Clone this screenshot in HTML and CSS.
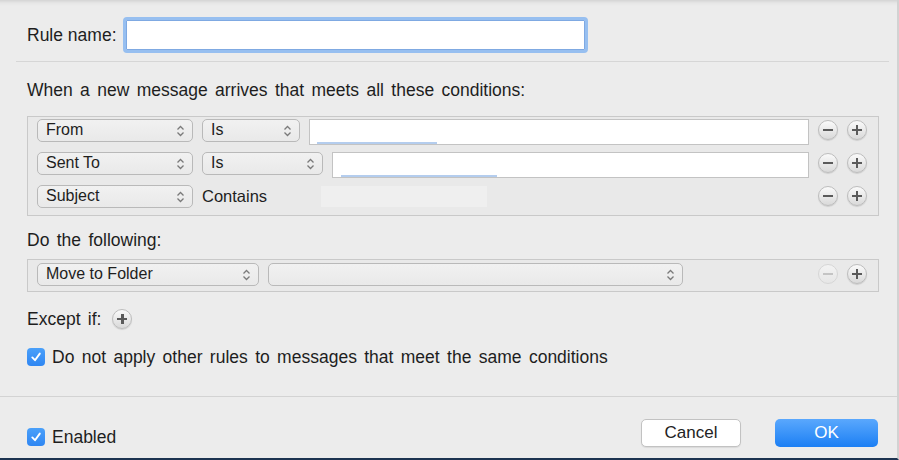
FILE: index.html
```html
<!DOCTYPE html>
<html>
<head>
<meta charset="utf-8">
<link rel="stylesheet" href="styles.css">
</head>
<body>
<div class="window">
  <div class="content">
    <div class="name-row">
      <label class="label tight">Rule name:</label>
      <div class="name-input"></div>
    </div>
    <div class="sep"></div>
    <div class="label heading">When a new message arrives that meets all these conditions:</div>
    <div class="box conditions">
      <div class="row">
        <div class="popup w156"><span>From</span><svg class="chev" width="9" height="12" viewBox="0 0 9 12"><path d="M1.5 4.5L4.5 1.5L7.5 4.5M1.5 7.5L4.5 10.5L7.5 7.5" fill="none" stroke="#7a7a7a" stroke-width="1.3"/></svg></div>
        <div class="popup w98"><span>Is</span><svg class="chev" width="9" height="12" viewBox="0 0 9 12"><path d="M1.5 4.5L4.5 1.5L7.5 4.5M1.5 7.5L4.5 10.5L7.5 7.5" fill="none" stroke="#7a7a7a" stroke-width="1.3"/></svg></div>
        <div class="field"><span class="mark m1"></span></div>
        <div class="circ"><span class="minus"></span></div>
        <div class="circ"><span class="plus"></span></div>
      </div>
      <div class="row">
        <div class="popup w156"><span>Sent To</span><svg class="chev" width="9" height="12" viewBox="0 0 9 12"><path d="M1.5 4.5L4.5 1.5L7.5 4.5M1.5 7.5L4.5 10.5L7.5 7.5" fill="none" stroke="#7a7a7a" stroke-width="1.3"/></svg></div>
        <div class="popup w121"><span>Is</span><svg class="chev" width="9" height="12" viewBox="0 0 9 12"><path d="M1.5 4.5L4.5 1.5L7.5 4.5M1.5 7.5L4.5 10.5L7.5 7.5" fill="none" stroke="#7a7a7a" stroke-width="1.3"/></svg></div>
        <div class="field"><span class="mark m2"></span></div>
        <div class="circ"><span class="minus"></span></div>
        <div class="circ"><span class="plus"></span></div>
      </div>
      <div class="row">
        <div class="popup w156"><span>Subject</span><svg class="chev" width="9" height="12" viewBox="0 0 9 12"><path d="M1.5 4.5L4.5 1.5L7.5 4.5M1.5 7.5L4.5 10.5L7.5 7.5" fill="none" stroke="#7a7a7a" stroke-width="1.3"/></svg></div>
        <div class="static">Contains</div>
        <div class="redact"></div>
        <div class="spacer"></div>
        <div class="circ"><span class="minus"></span></div>
        <div class="circ"><span class="plus"></span></div>
      </div>
    </div>
    <div class="label heading2">Do the following:</div>
    <div class="box actions">
      <div class="row">
        <div class="popup w222"><span>Move to Folder</span><svg class="chev" width="9" height="12" viewBox="0 0 9 12"><path d="M1.5 4.5L4.5 1.5L7.5 4.5M1.5 7.5L4.5 10.5L7.5 7.5" fill="none" stroke="#7a7a7a" stroke-width="1.3"/></svg></div>
        <div class="popup w415"><span></span><svg class="chev" width="9" height="12" viewBox="0 0 9 12"><path d="M1.5 4.5L4.5 1.5L7.5 4.5M1.5 7.5L4.5 10.5L7.5 7.5" fill="none" stroke="#7a7a7a" stroke-width="1.3"/></svg></div>
        <div class="spacer"></div>
        <div class="circ disabled"><span class="minus"></span></div>
        <div class="circ"><span class="plus"></span></div>
      </div>
    </div>
    <div class="except-row">
      <span class="label">Except if:</span>
      <div class="circ"><span class="plus"></span></div>
    </div>
    <div class="check-row">
      <span class="checkbox"><svg width="12" height="12" viewBox="0 0 12 12"><path d="M2.3 6.4L5 9.2L9.8 2.6" fill="none" stroke="#fff" stroke-width="1.9" stroke-linecap="round" stroke-linejoin="round"/></svg></span>
      <span class="label">Do not apply other rules to messages that meet the same conditions</span>
    </div>
  </div>
  <div class="footer">
    <div class="check-row enabled">
      <span class="checkbox"><svg width="12" height="12" viewBox="0 0 12 12"><path d="M2.3 6.4L5 9.2L9.8 2.6" fill="none" stroke="#fff" stroke-width="1.9" stroke-linecap="round" stroke-linejoin="round"/></svg></span>
      <span class="label tight">Enabled</span>
    </div>
    <div class="buttons">
      <button class="btn cancel">Cancel</button>
      <button class="btn ok">OK</button>
    </div>
  </div>
</div>
</body>
</html>
```

FILE: styles.css
```css
html, body {
  margin: 0;
  padding: 0;
}
body {
  width: 899px;
  height: 460px;
  overflow: hidden;
  background: #ececec;
  font-family: "Liberation Sans", Arial, sans-serif;
  color: #1e1e1e;
}
.window {
  box-sizing: border-box;
  width: 899px;
  height: 460px;
  display: flex;
  flex-direction: column;
  background: linear-gradient(to bottom, #d4d4d4 0px, #e6e6e6 3px, #ececec 6px, #ececec 100%);
  border-right: 2px solid #d2d2d2;
  border-bottom: 2px solid #1c3350;
}
.content {
  display: flex;
  flex-direction: column;
  padding-left: 27px;
  height: 397px;
  box-sizing: border-box;
  border-bottom: 1px solid #d3d3d3;
}
.label {
  font-size: 17.5px;
  line-height: 20px;
  word-spacing: 2.5px;
}
.label.tight {
  word-spacing: 0;
}
.name-row {
  display: flex;
  align-items: center;
  gap: 6px;
  margin-top: 17px;
}
.name-input {
  box-sizing: border-box;
  width: 465px;
  height: 36px;
  background: #fff;
  border: 3px solid #97bff0;
  border-radius: 4px;
  box-shadow: inset 0 0 0 1px #7fa9e2;
}
.sep {
  height: 1px;
  background: #d6d6d6;
  margin: 8px 8px 0 -11px;
}
.heading {
  margin-top: 18px;
}
.box {
  box-sizing: border-box;
  width: 852px;
  background: #e9e9e9;
  border: 1px solid #c9c9c9;
  display: flex;
  flex-direction: column;
  gap: 10px;
  padding: 2px 11px 7px 9px;
}
.conditions {
  margin-top: 16px;
}
.row {
  display: flex;
  align-items: flex-start;
  height: 23px;
}
.popup {
  box-sizing: border-box;
  height: 23px;
  display: flex;
  align-items: center;
  justify-content: space-between;
  padding: 0 7px 0 8px;
  border: 1px solid #b9b9b9;
  border-radius: 5px;
  background: linear-gradient(#f1f1f1, #e9e9e9);
  font-size: 16px;
  margin-right: 9px;
  flex: none;
}
.popup span {
  line-height: 18px;
  margin-top: -2px;
}
.chev {
  flex: none;
}
.w156 { width: 156px; }
.w98 { width: 98px; }
.w121 { width: 121px; }
.w222 { width: 222px; }
.w415 { width: 415px; }
.field {
  box-sizing: border-box;
  flex: 1;
  height: 26px;
  background: #fff;
  border: 1px solid #c3c3c3;
  margin-right: 9px;
  display: flex;
  align-items: flex-end;
}
.mark {
  display: block;
  height: 2px;
  background: #b4cdee;
}
.m1 { width: 120px; margin-left: 7px; }
.m2 { width: 156px; margin-left: 8px; }
.static {
  font-size: 16.5px;
  line-height: 23px;
}
.redact {
  width: 166px;
  height: 21px;
  margin: 1px 0 0 54px;
  background: #efefef;
}
.spacer {
  flex: 1;
  margin-right: 9px;
}
.circ {
  box-sizing: border-box;
  width: 20px;
  height: 20px;
  margin-top: 1px;
  border-radius: 50%;
  border: 1px solid #bdbdbd;
  background: linear-gradient(#fafafa, #d9d9d9);
  box-shadow: 0 1px 1px rgba(0,0,0,0.12);
  position: relative;
  flex: none;
}
.circ + .circ {
  margin-left: 9px;
}
.minus, .plus {
  position: absolute;
  left: 50%;
  top: 50%;
  width: 10px;
  height: 2.4px;
  margin: -1.2px 0 0 -5px;
  background: #5a5a5a;
}
.plus::after {
  content: "";
  position: absolute;
  left: 3.8px;
  top: -3.8px;
  width: 2.4px;
  height: 10px;
  background: #5a5a5a;
}
.circ.disabled {
  border-color: #d6d6d6;
  background: linear-gradient(#f3f3f3, #e6e6e6);
  box-shadow: none;
}
.circ.disabled .minus {
  background: #c4c4c4;
}
.heading2 {
  margin-top: 14px;
}
.actions {
  margin-top: 9px;
  padding: 3px 11px 5px 9px;
}
.except-row {
  display: flex;
  align-items: center;
  gap: 11px;
  margin-top: 16px;
}
.except-row .circ {
  margin-top: 1px;
}
.check-row {
  display: flex;
  align-items: center;
  gap: 7px;
  margin-top: 18px;
}
.checkbox {
  box-sizing: border-box;
  width: 18px;
  height: 18px;
  border-radius: 4px;
  background: linear-gradient(#4aa0fa, #2f86f2);
  display: flex;
  align-items: center;
  justify-content: center;
  flex: none;
}
.footer {
  flex: 1;
  display: flex;
  align-items: center;
  justify-content: space-between;
  padding: 0 19px 0 27px;
}
.check-row.enabled {
  margin-top: 18px;
}
.buttons {
  display: flex;
  gap: 34px;
  margin-top: 11px;
}
.btn {
  box-sizing: border-box;
  height: 28px;
  border-radius: 5px;
  font-family: "Liberation Sans", Arial, sans-serif;
  font-size: 17px;
  padding: 0;
}
.cancel {
  width: 100px;
  background: #fff;
  border: 1px solid #c2c2c2;
  color: #222;
  box-shadow: 0 1px 1px rgba(0,0,0,0.08);
}
.ok {
  width: 103px;
  border: none;
  color: #fff;
  background: linear-gradient(#5aa8fd, #1c7ff4);
}
```
